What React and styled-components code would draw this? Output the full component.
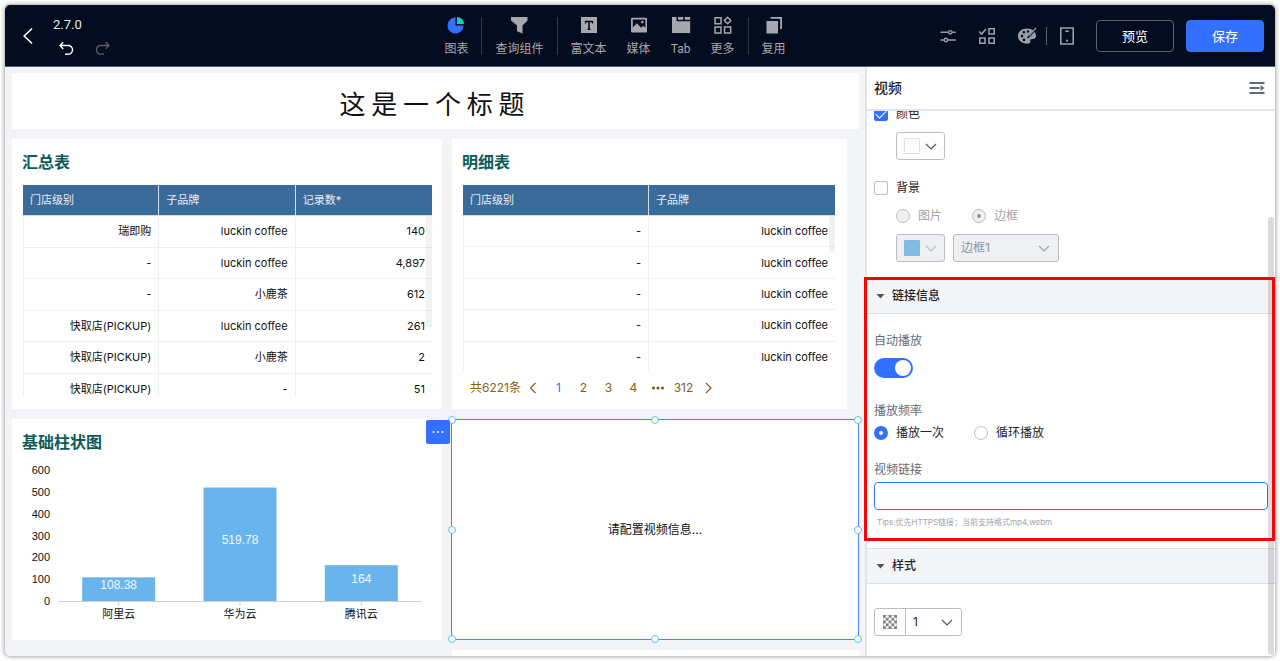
import React, { useState } from 'react';
import styled, { createGlobalStyle } from 'styled-components';

const GlobalStyle = createGlobalStyle`
	* {
		box-sizing: border-box;
	}

	body {
		margin: 0;
		background: #fff;
		color: #1f2329;
		font-family: Inter, "Noto Sans CJK SC", sans-serif;
		font-size: 12px;
		line-height: 20px;
	}

	button,
	input,
	select {
		font: inherit;
		color: inherit;
		margin: 0;
	}

	svg {
		display: block;
		flex: none;
	}
`;

const Page = styled.div`
	height: 100vh;
	padding: 5px;
`;

const Window = styled.div`
	display: flex;
	flex-direction: column;
	height: 100%;
	border-radius: 5px;
	overflow: hidden;
	background: #f3f4f7;
	box-shadow: 0 0 5px rgba(0, 0, 0, 0.5);
`;

/* top bar */

const Header = styled.header`
	display: grid;
	grid-template-columns: 430fr auto 480fr;
	align-items: center;
	flex: none;
	height: 62px;
	background: #040c1f;
	border-bottom: 1px solid #5d606b;
	color: #fff;
`;

const HeaderLeft = styled.div`
	display: flex;
	align-items: center;
	gap: 16px;
	padding-left: 14px;
`;

const IconButton = styled.button`
	display: flex;
	align-items: center;
	justify-content: center;
	padding: 0;
	border: none;
	background: transparent;
	color: ${props => props.$color || 'inherit'};
	cursor: pointer;
`;

const Version = styled.div`
	font-family: Roboto, sans-serif;
	font-size: 13px;
	line-height: 20px;
	color: #e6e8eb;
`;

const History = styled.div`
	display: flex;
	gap: 21px;
	padding: 6px 0 0 5px;
`;

const Toolbar = styled.nav`
	display: flex;
	align-items: center;
`;

const Tool = styled.button`
	display: flex;
	flex-direction: column;
	align-items: center;
	gap: 4px;
	padding: 3px 10px 0;
	border: none;
	background: transparent;
	color: #a6a8ad;
	font-family: Roboto, "Noto Sans CJK SC", sans-serif;
	font-size: 12px;
	line-height: 20px;
	cursor: pointer;
`;

const Divider = styled.span`
	width: 1px;
	height: ${props => props.$height || '38px'};
	margin: 0 3px;
	background: #30384a;
`;

const HeaderRight = styled.div`
	display: flex;
	align-items: center;
	justify-content: flex-end;
	gap: 12px;
	padding-right: 11px;
	color: #9a9ea6;
`;

const Actions = styled.div`
	display: flex;
	align-items: center;
	gap: 21px;
	margin-right: 9px;
`;

const DeviceGroup = styled.div`
	display: flex;
	align-items: center;
	gap: 9px;

	${Divider} {
		margin-left: -12px;
		background: #5a606d;
	}
`;

const HeaderButton = styled.button`
	width: 78px;
	height: 32px;
	padding: 0;
	border: 1px solid ${props => (props.$primary ? '#3370ff' : '#5a606d')};
	border-radius: 4px;
	background: ${props => (props.$primary ? '#3370ff' : 'transparent')};
	color: #fff;
	font-size: 13px;
	cursor: pointer;
`;

/* canvas */

const Main = styled.div`
	display: flex;
	flex: 1;
	min-height: 0;
`;

const Canvas = styled.main`
	flex: 1;
	min-width: 0;
	display: grid;
	grid-template-columns: 430fr 407fr;
	grid-auto-rows: max-content;
	gap: 10px;
	padding: 6px 6px 0 7px;
	overflow: hidden;
`;

const TitleCard = styled.h1`
	grid-column: 1 / -1;
	margin: 0;
	padding: 12px 7px 8px 0;
	background: #fff;
	color: #111;
	font-family: "Noto Sans CJK SC", sans-serif;
	font-size: 26px;
	font-weight: 400;
	line-height: 36px;
	text-align: center;
`;

const Card = styled.section`
	padding: 11px ${props => (props.$inset ? '12px' : '10px')} 9px 10px;
	margin-right: ${props => (props.$inset ? '12px' : '0')};
	background: #fff;
	min-width: 0;
`;

const CardTitle = styled.h2`
	margin: 0 0 11px;
	color: #0d5c59;
	font-size: 16px;
	font-weight: 700;
	line-height: 24px;
`;

const TableBox = styled.div`
	position: relative;
	height: ${props => props.$height};
	margin-left: 1px;
	overflow: hidden;
`;

const ScrollThumb = styled.span`
	position: absolute;
	top: 31px;
	right: 0;
	width: 6px;
	height: ${props => props.$height};
	background: rgba(0, 0, 0, 0.05);
`;

const Table = styled.table`
	width: 100%;
	height: ${props => props.$height};
	table-layout: fixed;
	border-collapse: separate;
	border-spacing: 0;
	font-size: 11px;
	line-height: 16px;

	th {
		height: 31px;
		padding: 0 7px;
		background: #3b6b9b;
		border-right: 1px solid #d5dfe9;
		border-bottom: 1px solid #d5dfe9;
		color: #e8eff6;
		font-weight: 400;
		text-align: left;
	}

	td {
		padding: 0 7px;
		border-right: 1px solid #efeeee;
		border-bottom: 1px solid #f1f0f0;
		color: #111;
		text-align: right;
	}

	td:first-child {
		border-left: 1px solid #efeeee;
	}

	th:last-child,
	td:last-child {
		border-right: none;
	}
`;

const Pagination = styled.nav`
	display: flex;
	align-items: center;
	padding: 6px 0 0 8px;
	color: #8a5c17;
	font-size: 12px;
	line-height: 24px;
`;

const PageButton = styled.button`
	display: flex;
	align-items: center;
	justify-content: center;
	width: 25px;
	height: 24px;
	padding: 0;
	border: none;
	background: transparent;
	color: ${props => (props.$active ? '#3370ff' : '#8a5c17')};
	cursor: pointer;
`;

const Chart = styled.svg`
	width: 100%;
	font-family: "Liberation Sans", "Noto Sans CJK SC", sans-serif;
`;

const VideoCard = styled.section`
	position: relative;
	display: flex;
	align-items: center;
	justify-content: center;
	margin-left: -1px;
	border: 1px solid #4c84ff;
	background: #fff;
	color: #111;
	font-size: 12px;
`;

const Handle = styled.span`
	position: absolute;
	left: ${props => props.$x};
	top: ${props => props.$y};
	width: 8px;
	height: 8px;
	border: 1px solid #5cc4f5;
	border-radius: 50%;
	background: #fff;
	transform: translate(-50%, -50%);
`;

const MoreButton = styled.button`
	position: absolute;
	top: 0;
	left: -26px;
	display: flex;
	align-items: center;
	justify-content: center;
	width: 24px;
	height: 24px;
	padding: 0;
	border: none;
	border-radius: 2px;
	background: #3370ff;
	color: #fff;
	cursor: pointer;
`;

const NextCard = styled.div`
	grid-column: 2;
	height: 60px;
	background: #fff;
`;

/* settings panel */

const Panel = styled.aside`
	position: relative;
	display: flex;
	flex-direction: column;
	flex: none;
	width: 410px;
	border-left: 2px solid #e2e4e8;
	background: #fff;
`;

const PanelHead = styled.div`
	display: flex;
	align-items: center;
	justify-content: space-between;
	flex: none;
	height: 44px;
	padding: 0 10px 0 7px;
	border-bottom: 2px solid #e2e4e8;
	color: #646a73;

	h2 {
		margin: 0;
		color: #1f2329;
		font-size: 14px;
		font-weight: 500;
		line-height: 20px;
	}
`;

const PanelBody = styled.div`
	flex: 1;
	min-height: 0;
	overflow-x: visible;
	overflow-y: clip;
`;

const PanelScrollThumb = styled.span`
	position: absolute;
	top: 150px;
	right: 1px;
	bottom: 1px;
	width: 6px;
	border-radius: 3px;
	background: rgba(31, 35, 41, 0.16);
`;

const Appearance = styled.div`
	display: flex;
	flex-direction: column;
	gap: 8px;
	margin-top: -7px;
	padding: 0 7px 16px;
`;

const Indent = styled.div`
	display: flex;
	gap: 8px;
	padding-left: 22px;
	margin-bottom: ${props => (props.$last ? '0' : '10px')};
`;

const Choice = styled.label`
	display: flex;
	align-items: center;
	gap: 8px;
	height: 20px;
	color: ${props => (props.$disabled ? '#a0a4aa' : '#1f2329')};
`;

const Checkbox = styled.input`
	appearance: none;
	display: grid;
	place-items: center;
	width: 14px;
	height: 14px;
	border: 1px solid #bbbfc4;
	border-radius: 2px;
	background: #fff;

	&:checked {
		border-color: #3370ff;
		background: #3370ff;
	}

	&:checked::after {
		content: '';
		width: 9px;
		height: 5px;
		margin-top: -3px;
		border: solid #fff;
		border-width: 0 0 1px 1px;
		transform: rotate(-45deg);
	}
`;

const Radio = styled.input`
	appearance: none;
	display: grid;
	place-items: center;
	width: 14px;
	height: 14px;
	border: 1px solid #bbbfc4;
	border-radius: 50%;
	background: #fff;

	&:checked {
		border: 5px solid #3370ff;
	}

	&:disabled {
		border: 1px solid #bbbfc4;
		background: #eff0f1;
	}

	&:disabled:checked::after {
		content: '';
		width: 4px;
		height: 4px;
		border-radius: 50%;
		background: #8f959e;
	}
`;

const RadioRow = styled.div`
	display: flex;
	gap: ${props => props.$gap};
`;

const ColorButton = styled.button`
	display: flex;
	align-items: center;
	justify-content: space-between;
	width: 49px;
	height: 28px;
	padding: 0 7px;
	border: 1px solid #bbbfc4;
	border-radius: 3px;
	background: #fff;
	color: #51565d;

	&:disabled {
		background: #eff0f1;
		color: #bbbfc4;
	}
`;

const Swatch = styled.span`
	width: 16px;
	height: 16px;
	border: 1px solid ${props => (props.$color === '#fff' ? '#dee0e3' : props.$color)};
	border-radius: 1px;
	background: ${props => props.$color};
`;

const SelectBox = styled.div`
	display: flex;
	align-items: center;
	position: relative;
	width: ${props => props.$width};
	height: 28px;
	border: 1px solid #bbbfc4;
	border-radius: 3px;
	background: ${props => (props.$disabled ? '#eff0f1' : '#fff')};
	color: ${props => (props.$disabled ? '#a0a4aa' : '#51565d')};

	select {
		appearance: none;
		flex: 1;
		min-width: 0;
		height: 100%;
		padding: 0 24px 0 7px;
		border: none;
		background: transparent;
		color: ${props => (props.$disabled ? '#8f959e' : '#1f2329')};
		opacity: 1;
		outline: none;
	}

	select + svg {
		position: absolute;
		right: 8px;
		pointer-events: none;
	}
`;

const OpacityMark = styled.span`
	display: flex;
	align-items: center;
	justify-content: center;
	width: 31px;
	height: 100%;
	border-right: 1px solid #bbbfc4;
`;

const Section = styled.section`
	position: relative;
`;

const SectionHead = styled.button`
	display: flex;
	align-items: center;
	gap: 7px;
	width: 100%;
	height: 36px;
	padding: 0 8px 0 9px;
	border: solid #dcdee2;
	border-width: 1px 0;
	background: #f4f5f7;
	color: #1f2329;
	font-weight: 500;
	cursor: pointer;
`;

const SectionBody = styled.div`
	display: flex;
	flex-direction: column;
	align-items: flex-start;
	padding: ${props => (props.$compact ? '24px' : '17px')} 7px;
`;

const FieldLabel = styled.label`
	height: 20px;
	color: #646a73;
`;

const Switch = styled.input`
	appearance: none;
	width: 39px;
	height: 20px;
	margin: 7px 0 23px;
	padding: 2px;
	border-radius: 10px;
	background: #bbbfc4;

	&::after {
		content: '';
		display: block;
		width: 16px;
		height: 16px;
		border-radius: 50%;
		background: #fff;
	}

	&:checked {
		background: #3370ff;
	}

	&:checked::after {
		margin-left: auto;
	}
`;

const Frequency = styled.fieldset`
	margin: 0 0 17px;
	padding: 0;
	border: none;

	legend {
		padding: 0;
		height: 22px;
		color: #646a73;
	}
`;

const UrlInput = styled.input`
	width: 100%;
	height: 28px;
	margin: 2px 0 4px;
	padding: 0 8px;
	border: 1px solid #3370ff;
	border-radius: 4px;
	background: #fff;
	outline: none;
`;

const Tips = styled.small`
	padding: 0 0 1px 3px;
	color: #a0a4aa;
	font-size: 8px;
	line-height: 16px;
`;

const Highlight = styled.div`
	position: absolute;
	top: -1px;
	left: -3px;
	right: 0;
	bottom: 7px;
	border: 3px solid #fe0000;
	z-index: 2;
	pointer-events: none;
`;

/* icons */

const Chevron = ({ size = 12, d = 'M1 4l5 5 5-5' }) => (
	<svg width={size} height={size} viewBox="0 0 12 12" fill="none" stroke="currentColor" strokeWidth="1.2">
		<path d={d} />
	</svg>
);

const BackIcon = () => (
	<svg width="18" height="18" viewBox="0 0 18 18" fill="none" stroke="currentColor" strokeWidth="1.6">
		<path d="M13 1.5L5.2 9l7.8 7.5" />
	</svg>
);

const UndoIcon = () => (
	<svg width="16" height="16" viewBox="0 0 16 16" fill="none" stroke="currentColor" strokeWidth="1.4">
		<path d="M5.2 1.2L2 4.5l3.2 3.4M2.2 4.5h8a4.3 4.3 0 0 1 0 8.7H7" />
	</svg>
);

const RedoIcon = () => (
	<svg width="16" height="16" viewBox="0 0 16 16" fill="none" stroke="currentColor" strokeWidth="1.3">
		<path d="M10.8 1.2L14 4.5l-3.2 3.4M13.8 4.5h-8a4.3 4.3 0 0 0 0 8.7H9" />
	</svg>
);

const ToolSvg = ({ children }) => (
	<svg width="20" height="20" viewBox="0 0 20 20" fill="currentColor">
		{children}
	</svg>
);

const ChartIcon = () => (
	<ToolSvg>
		<path d="M9.5 2.5v8h8a8 8 0 1 1-8-8z" fill="#3370ff" />
		<path d="M11 2a7.2 7.2 0 0 1 7 7h-7z" fill="#00d6b9" />
	</ToolSvg>
);

const FilterIcon = () => (
	<ToolSvg>
		<path d="M2 2h16.5v3.6l-5 4.8V18.6L8 16.2v-5.8L2 5.6z" />
	</ToolSvg>
);

const TextIcon = () => (
	<ToolSvg>
		<path fillRule="evenodd" d="M2 2h16v16H2zM5.8 5.8v2.8h1.4V7.2h2v6.6H8.4v1.2h3.2v-1.2h-.8V7.2h2v1.4h1.4V5.8z" />
	</ToolSvg>
);

const MediaIcon = () => (
	<ToolSvg>
		<path fillRule="evenodd" d="M3.4 2.8h13.2A1.4 1.4 0 0 1 18 4.2v12a1.4 1.4 0 0 1-1.4 1.4H3.4A1.4 1.4 0 0 1 2 16.2v-12A1.4 1.4 0 0 1 3.4 2.8zM3.8 4.4v8l4-4.2 4.4 4.6 2-2 2.200 2V4.4zM13.4 5.8a1.3 1.3 0 1 1 0 2.6 1.3 1.3 0 0 1 0-2.6z" />
	</ToolSvg>
);

const TabIcon = () => (
	<ToolSvg>
		<path d="M1 2h4.6v4.2H19.2v11.8H1zM7 2h5.2v2.8H7zM13.8 2h5.4v2.8h-5.4z" />
	</ToolSvg>
);

const GridIcon = () => (
	<svg width="20" height="20" viewBox="0 0 20 20" fill="none" stroke="currentColor" strokeWidth="1.5">
		<path d="M2 2.7h6v6H2zM2 11.9h6v6H2zM11.5 11.9h6.2v6h-6.2zM14.6 2.2l3.3 3.3-3.3 3.3-3.3-3.3z" />
	</svg>
);

const CopyIcon = () => (
	<ToolSvg>
		<path d="M2.5 6H14v12.500H2.500zM6.500 2H18v12h-1.800V3.800H6.500z" />
	</ToolSvg>
);

const SlidersIcon = () => (
	<svg width="18" height="18" viewBox="0 0 18 18" fill="none" stroke="currentColor" strokeWidth="1.4">
		<path d="M1.500 5.300h8M13 5.300h3.800M1.500 13h3.600M8.600 13h8.200" />
		<circle cx="11.2" cy="5.3" r="1.7" />
		<circle cx="6.9" cy="13" r="1.7" />
	</svg>
);

const ComponentsIcon = () => (
	<svg width="18" height="18" viewBox="0 0 18 18" fill="none" stroke="currentColor" strokeWidth="1.6">
		<path d="M1.2 4.500l2.400 2.600L8 2M11 1.800h5.200V7H11zM1.800 11H7v5.200H1.800zM11 11h5.200v5.200H11z" />
	</svg>
);

const PaletteIcon = () => (
	<svg width="20" height="20" viewBox="0 0 20 20" fill="currentColor">
		<path
			fillRule="evenodd"
			d="M10 2.500c2.500 0 4.600.7 6.200 1.900l-5 5.400c-.5.600-.9 1.500-1 2.400 1 0 1.900-.3 2.400-.9l4.900-5.500c1 1.200 1.500 2.600 1.500 4.100 0 2-1.500 3.100-3.700 3.100-1.800 0-2.300.7-1.900 2 .4 1.500-.8 2.700-3.400 2.700C4.700 17.700.9 14.500.9 10.100S4.700 2.500 10 2.500zM5 8.800a1.300 1.300 0 1 0 0 2.600 1.300 1.300 0 0 0 0-2.600zM6.900 4.900a1.300 1.300 0 1 0 0 2.600 1.300 1.300 0 0 0 0-2.600zM11 4.300a1.200 1.200 0 1 0 0 2.400 1.200 1.200 0 0 0 0-2.400zM7 12.600a1.300 1.300 0 1 0 0 2.600 1.300 1.300 0 0 0 0-2.600z"
		/>
		<path d="M18.600 1.400l1 .8-7.500 8.300-.9-.8z" />
	</svg>
);

const PhoneIcon = () => (
	<svg width="16" height="18" viewBox="0 0 16 18" fill="none" stroke="currentColor" strokeWidth="1.6">
		<path d="M1.800 1h12.400v16H1.800zM6.200 4.200h3.600M7 13.600h2" />
	</svg>
);

const CollapseIcon = () => (
	<svg width="16" height="14" viewBox="0 0 16 14" fill="none" stroke="currentColor" strokeWidth="2">
		<path d="M.5 2h15M.5 7h10M.5 12h15" />
		<path d="M11.500 4L15.500 7l-4 3z" fill="currentColor" stroke="none" />
	</svg>
);

const DotsIcon = ({ r = 1 }) => (
	<svg width="14" height="6" viewBox="0 0 14 6" fill="currentColor">
		<circle cx="2.5" cy="3" r={r} />
		<circle cx="7" cy="3" r={r} />
		<circle cx="11.5" cy="3" r={r} />
	</svg>
);

const CaretIcon = () => (
	<svg width="9" height="6" viewBox="0 0 9 6" fill="#51565d">
		<path d="M.5 1h8L4.500 5.500z" />
	</svg>
);

const checks = [];
for (let y = 0; y < 5; y++) {
	for (let x = 0; x < 5; x++) {
		if ((x + y) % 2 === 0) checks.push([x, y]);
	}
}

const CheckerIcon = () => (
	<svg width="14" height="14" viewBox="0 0 15 15">
		<rect x="0.5" y="0.5" width="14" height="14" rx="1" fill="#fff" stroke="#c9ccd0" />
		{checks.map(([x, y]) => (
			<rect key={`${x}-${y}`} x={x * 3} y={y * 3} width="3" height="3" fill="#7d8187" />
		))}
	</svg>
);

/* data */

const toolGroups = [
	[{ name: '图表', icon: ChartIcon }],
	[{ name: '查询组件', icon: FilterIcon }],
	[
		{ name: '富文本', icon: TextIcon },
		{ name: '媒体', icon: MediaIcon },
		{ name: 'Tab', icon: TabIcon },
		{ name: '更多', icon: GridIcon }
	],
	[{ name: '复用', icon: CopyIcon }]
];

const summaryRows = [
	['瑞即购', 'luckin coffee', '140'],
	['-', 'luckin coffee', '4,897'],
	['-', '小鹿茶', '612'],
	['快取店(PICKUP)', 'luckin coffee', '261'],
	['快取店(PICKUP)', '小鹿茶', '2'],
	['快取店(PICKUP)', '-', '51']
];

const detailRows = Array.from({ length: 5 }, () => ['-', 'luckin coffee']);

const bars = [
	{ name: '阿里云', value: 108.38 },
	{ name: '华为云', value: 519.78 },
	{ name: '腾讯云', value: 164 }
];

const handles = [
	['0%', '0%'],
	['50%', '0%'],
	['100%', '0%'],
	['0%', '50%'],
	['100%', '50%'],
	['0%', '100%'],
	['50%', '100%'],
	['100%', '100%']
];

const DataTable = ({ columns, rows, height }) => (
	<Table $height={height}>
		<thead>
			<tr>{columns.map(x => <th key={x}>{x}</th>)}</tr>
		</thead>
		<tbody>
			{rows.map((row, i) => (
				<tr key={i}>{row.map((cell, j) => <td key={j}>{cell}</td>)}</tr>
			))}
		</tbody>
	</Table>
);

const BarChart = () => {
	const left = 36;
	const width = 364;
	const base = 136;
	const scale = 131 / 600;
	const step = width / bars.length;

	return (
		<Chart viewBox="0 0 410 166">
			{[0, 100, 200, 300, 400, 500, 600].map(x => (
				<text key={x} x="28" y={base - x * scale + 4} fontSize="11" textAnchor="end" fill="#111">
					{x}
				</text>
			))}
			<path d={`M${left} ${base + 0.5}h${width}`} stroke="#cfd1d4" />
			{bars.map((bar, i) => {
				const center = left + step * i + step / 2;
				const height = bar.value * scale;
				return (
					<g key={bar.name} textAnchor="middle">
						<rect x={center - 36.5} y={base - height} width="73" height={height} fill="#6ab4ee" />
						<path d={`M${center} ${base + 1}v4`} stroke="#cfd1d4" />
						<text x={center} y={base - height / 2} fontSize="12" fill="#f2f8fd">
							{bar.value}
						</text>
						<text x={center} y={base + 17} fontSize="11" fill="#111">
							{bar.name}
						</text>
					</g>
				);
			})}
		</Chart>
	);
};

const TopBar = () => (
	<Header>
		<HeaderLeft>
			<IconButton aria-label="返回">
				<BackIcon />
			</IconButton>
			<div>
				<Version>2.7.0</Version>
				<History>
					<IconButton aria-label="撤销">
						<UndoIcon />
					</IconButton>
					<IconButton aria-label="重做" $color="#5c5e63">
						<RedoIcon />
					</IconButton>
				</History>
			</div>
		</HeaderLeft>
		<Toolbar>
			{toolGroups.map((group, i) => (
				<React.Fragment key={i}>
					{i > 0 && <Divider />}
					{group.map(({ name, icon: Icon }) => (
						<Tool key={name}>
							<Icon />
							{name}
						</Tool>
					))}
				</React.Fragment>
			))}
		</Toolbar>
		<HeaderRight>
			<Actions>
				<IconButton aria-label="筛选">
					<SlidersIcon />
				</IconButton>
				<IconButton aria-label="组件">
					<ComponentsIcon />
				</IconButton>
				<IconButton aria-label="主题">
					<PaletteIcon />
				</IconButton>
				<DeviceGroup>
					<Divider $height="18px" />
					<IconButton aria-label="移动端">
						<PhoneIcon />
					</IconButton>
				</DeviceGroup>
			</Actions>
			<HeaderButton>预览</HeaderButton>
			<HeaderButton $primary>保存</HeaderButton>
		</HeaderRight>
	</Header>
);

const SettingsPanel = () => {
	const [ showColor, setShowColor ] = useState(true);
	const [ showBackground, setShowBackground ] = useState(false);
	const [ autoplay, setAutoplay ] = useState(true);
	const [ frequency, setFrequency ] = useState('once');
	const [ url, setUrl ] = useState('');

	return (
		<Panel>
			<PanelHead>
				<h2>视频</h2>
				<IconButton aria-label="收起">
					<CollapseIcon />
				</IconButton>
			</PanelHead>
			<PanelBody>
				<Appearance>
					<Choice>
						<Checkbox type="checkbox" checked={showColor} onChange={e => setShowColor(e.target.checked)} />
						颜色
					</Choice>
					<Indent>
						<ColorButton aria-label="颜色">
							<Swatch $color="#fff" />
							<Chevron />
						</ColorButton>
					</Indent>
					<Choice>
						<Checkbox
							type="checkbox"
							checked={showBackground}
							onChange={e => setShowBackground(e.target.checked)}
						/>
						背景
					</Choice>
					<Indent $last>
						<RadioRow $gap="30px">
							<Choice $disabled={!showBackground}>
								<Radio type="radio" name="background" disabled={!showBackground} />
								图片
							</Choice>
							<Choice $disabled={!showBackground}>
								<Radio type="radio" name="background" defaultChecked disabled={!showBackground} />
								边框
							</Choice>
						</RadioRow>
					</Indent>
					<Indent $last>
						<ColorButton aria-label="边框颜色" disabled={!showBackground}>
							<Swatch $color="#7fbbe3" />
							<Chevron />
						</ColorButton>
						<SelectBox $width="106px" $disabled={!showBackground}>
							<select aria-label="边框" disabled={!showBackground}>
								<option>边框1</option>
							</select>
							<Chevron />
						</SelectBox>
					</Indent>
				</Appearance>
				<Section>
					<SectionHead>
						<CaretIcon />
						链接信息
					</SectionHead>
					<SectionBody>
						<FieldLabel htmlFor="autoplay">自动播放</FieldLabel>
						<Switch
							id="autoplay"
							type="checkbox"
							role="switch"
							checked={autoplay}
							onChange={e => setAutoplay(e.target.checked)}
						/>
						<Frequency>
							<legend>播放频率</legend>
							<RadioRow $gap="30px">
								<Choice>
									<Radio
										type="radio"
										name="frequency"
										checked={frequency === 'once'}
										onChange={() => setFrequency('once')}
									/>
									播放一次
								</Choice>
								<Choice>
									<Radio
										type="radio"
										name="frequency"
										checked={frequency === 'loop'}
										onChange={() => setFrequency('loop')}
									/>
									循环播放
								</Choice>
							</RadioRow>
						</Frequency>
						<FieldLabel htmlFor="url">视频链接</FieldLabel>
						<UrlInput id="url" type="text" value={url} onChange={e => setUrl(e.target.value)} />
						<Tips>Tips:优先HTTPS链接；当前支持格式mp4,webm</Tips>
					</SectionBody>
					<Highlight />
				</Section>
				<Section>
					<SectionHead>
						<CaretIcon />
						样式
					</SectionHead>
					<SectionBody $compact>
						<SelectBox $width="88px">
							<OpacityMark>
								<CheckerIcon />
							</OpacityMark>
							<select aria-label="不透明度">
								<option>1</option>
							</select>
							<Chevron />
						</SelectBox>
					</SectionBody>
				</Section>
			</PanelBody>
			<PanelScrollThumb />
		</Panel>
	);
};

const App = () => {
	const [ page, setPage ] = useState(1);

	return (
		<Page>
			<GlobalStyle />
			<Window>
				<TopBar />
				<Main>
					<Canvas>
						<TitleCard>这 是 一 个 标 题</TitleCard>
						<Card>
							<CardTitle>汇总表</CardTitle>
							<TableBox $height="210px">
								<DataTable columns={[ '门店级别', '子品牌', '记录数*' ]} rows={summaryRows} height="220px" />
								<ScrollThumb $height="111px" />
							</TableBox>
						</Card>
						<Card $inset>
							<CardTitle>明细表</CardTitle>
							<TableBox $height="185px">
								<DataTable columns={[ '门店级别', '子品牌' ]} rows={detailRows} height="188px" />
								<ScrollThumb $height="36px" />
							</TableBox>
							<Pagination>
								共6221条
								<PageButton aria-label="上一页">
									<Chevron d="M8.500 1l-5 5 5 5" />
								</PageButton>
								{[1, 2, 3, 4].map(x => (
									<PageButton key={x} $active={x === page} onClick={() => setPage(x)}>
										{x}
									</PageButton>
								))}
								<PageButton aria-label="更多页">
									<DotsIcon r={1.6} />
								</PageButton>
								<PageButton onClick={() => setPage(312)}>312</PageButton>
								<PageButton aria-label="下一页">
									<Chevron d="M4 1l5 5-5 5" />
								</PageButton>
							</Pagination>
						</Card>
						<Card>
							<CardTitle>基础柱状图</CardTitle>
							<BarChart />
						</Card>
						<VideoCard>
							请配置视频信息...
							{handles.map(([x, y]) => <Handle key={x + y} $x={x} $y={y} />)}
							<MoreButton aria-label="更多操作">
								<DotsIcon />
							</MoreButton>
						</VideoCard>
						<NextCard />
					</Canvas>
					<SettingsPanel />
				</Main>
			</Window>
		</Page>
	);
};

export default App;
